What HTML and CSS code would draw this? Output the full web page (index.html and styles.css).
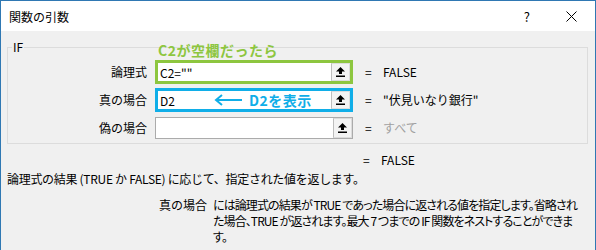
FILE: index.html
```html
<!DOCTYPE html>
<html>
<head>
  <title>関数の引数</title>
  <link rel="stylesheet" href="styles.css">
</head>
<body>
  <div class="dialog">
    <div class="titlebar">
      <span class="title">関数の引数</span>
      <span class="help">?</span>
      <svg class="close" width="11" height="11" viewBox="0 0 11 11">
        <path d="M0.5 0.5 L10.5 10.5 M10.5 0.5 L0.5 10.5" stroke="#000" stroke-width="1" fill="none"/>
      </svg>
    </div>

    <div class="content">
      <fieldset class="args">
        <legend>IF</legend>

        <div class="row">
          <label>論理式</label>
          <div class="field is-green">
            <span class="field-text">C2=""</span>
            <span class="field-btn">
              <svg width="9" height="10" viewBox="0 0 9 10"><polygon points="4.5,0 9,4.5 6,4.5 6,7 3,7 3,4.5 0,4.5" fill="#000"/><rect x="0" y="8.5" width="9" height="1.5" fill="#000"/></svg>
            </span>
          </div>
          <span class="eq">=</span>
          <span class="val">FALSE</span>
        </div>

        <div class="row">
          <label>真の場合</label>
          <div class="field is-blue">
            <span class="field-text">D2</span>
            <span class="note-blue">
              <svg width="28" height="12" viewBox="0 0 28 12"><path d="M2 6 H28 M8 1 L2 6 L8 11" stroke="#10aee8" stroke-width="2" fill="none"/></svg>
              D2を表示
            </span>
            <span class="field-btn">
              <svg width="9" height="10" viewBox="0 0 9 10"><polygon points="4.5,0 9,4.5 6,4.5 6,7 3,7 3,4.5 0,4.5" fill="#000"/><rect x="0" y="8.5" width="9" height="1.5" fill="#000"/></svg>
            </span>
          </div>
          <span class="eq">=</span>
          <span class="val">"伏見いなり銀行"</span>
        </div>

        <div class="row">
          <label>偽の場合</label>
          <div class="field">
            <span class="field-text"></span>
            <span class="field-btn">
              <svg width="9" height="10" viewBox="0 0 9 10"><polygon points="4.5,0 9,4.5 6,4.5 6,7 3,7 3,4.5 0,4.5" fill="#000"/><rect x="0" y="8.5" width="9" height="1.5" fill="#000"/></svg>
            </span>
          </div>
          <span class="eq">=</span>
          <span class="val muted">すべて</span>
        </div>
      </fieldset>

      <span class="note-green">C2が空欄だったら</span>

      <div class="total">
        <span class="eq">=</span>
        <span class="val">FALSE</span>
      </div>

      <p class="summary">論理式の結果 (TRUE か FALSE) に応じて、指定された値を返します。</p>

      <div class="arg-help">
        <span class="arg-name">真の場合</span>
        <p class="arg-desc">には論理式の結果が TRUE であった場合に返される値を指定します。省略され<br>た場合、TRUE が返されます。最大 7 つまでの IF 関数をネストすることができま<br>す。</p>
      </div>
    </div>
  </div>
</body>
</html>
```

FILE: styles.css
```css
body {
  margin: 0;
  font-family: "Noto Sans CJK JP", "Noto Sans", sans-serif;
  font-size: 12px;
  color: #000;
}
.dialog {
  width: 594px;
  height: 249px;
  border: 1px solid #2f78b3;
  border-bottom: none;
  background: #f0f0f0;
  overflow: hidden;
}
.titlebar {
  height: 30px;
  background: #fff;
  display: flex;
  align-items: center;
  padding-left: 8px;
}
.title {
  flex: 1;
}
.help {
  margin-right: 36px;
  font-size: 13px;
}
.close {
  margin-right: 18px;
}
.content {
  position: relative;
  padding-top: 9px;
}
.args {
  box-sizing: border-box;
  width: 581px;
  margin: 0 0 0 6px;
  padding: 4px 0 1px;
  border: 1px solid #dcdcdc;
  min-width: 0;
}
.args legend {
  padding: 0 1px;
  margin-left: 4px;
  line-height: 14px;
}
.row {
  display: flex;
  align-items: center;
  height: 28px;
}
.row label {
  width: 139px;
  margin-right: 8px;
  text-align: right;
  line-height: 16px;
}
.field {
  position: relative;
  box-sizing: border-box;
  width: 198px;
  height: 22px;
  border: 1px solid #ababab;
  background: #fff;
  display: flex;
}
.field.is-green {
  height: 24px;
  border: 3px solid #8dc63f;
}
.field.is-blue {
  height: 24px;
  border: 3px solid #10aee8;
}
.field-text {
  flex: 1;
  display: flex;
  align-items: center;
  padding-left: 2px;
}
.field-btn {
  width: 17px;
  display: flex;
  align-items: center;
  justify-content: center;
  background: #f3f3f3;
  border: 1px solid #dcdcdc;
  border-left-color: #bdbdbd;
}
.eq {
  width: 18px;
  margin-left: 12px;
}
.row .eq,
.row .val {
  line-height: 16px;
}
.muted {
  color: #a0a0a0;
}
.note-green {
  position: absolute;
  left: 157px;
  top: 12px;
  color: #8dc63f;
  font-weight: bold;
  font-size: 14px;
  line-height: 14px;
  letter-spacing: 0.5px;
}
.note-blue {
  position: absolute;
  left: 56px;
  top: 0;
  bottom: 0;
  display: flex;
  align-items: center;
  gap: 7px;
  color: #10aee8;
  font-weight: bold;
  font-size: 14px;
  letter-spacing: 0.5px;
}
.total {
  display: flex;
  margin-top: 8px;
  padding-left: 350px;
  line-height: 16px;
}
.summary {
  margin: 3px 0 0 6px;
  line-height: 16px;
  letter-spacing: -0.3px;
}
.arg-help {
  display: flex;
  margin-top: 10px;
  padding-left: 158px;
  line-height: 16px;
}
.arg-name {
  flex-shrink: 0;
  width: 54px;
}
.arg-desc {
  margin: 0;
  white-space: nowrap;
  font-feature-settings: "palt";
  letter-spacing: -0.9px;
}
```
